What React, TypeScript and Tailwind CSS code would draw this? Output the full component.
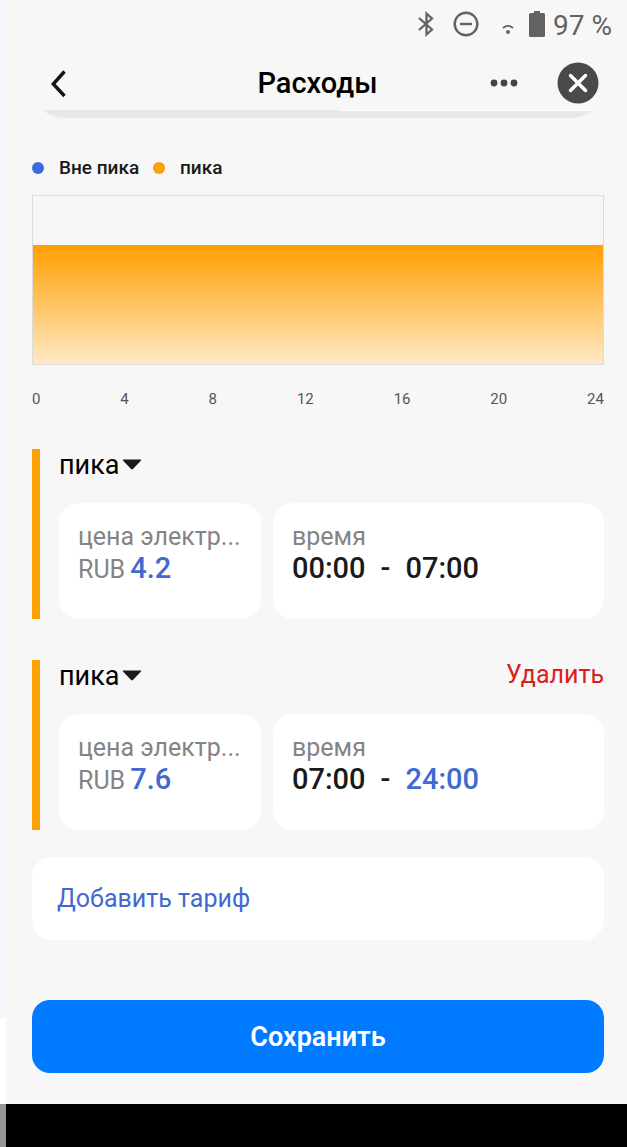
import { useState } from "react";

type Period = {
  id: string;
  kind: string;
  price: string;
  from: string;
  to: string;
  editableEnd: boolean;
  removable: boolean;
};

const HOURS = [0, 4, 8, 12, 16, 20, 24];

const LEGEND = [
  { label: "Вне пика", dot: "bg-[#3d6ae0]", text: "w-[94px]" },
  { label: "пика", dot: "bg-[#fca004]", text: "" },
];

const INITIAL_PERIODS: Period[] = [
  { id: "a", kind: "пика", price: "4.2", from: "00:00", to: "07:00", editableEnd: false, removable: false },
  { id: "b", kind: "пика", price: "7.6", from: "07:00", to: "24:00", editableEnd: true, removable: true },
];

function StatusBar() {
  return (
    <div className="flex h-12 items-center justify-end pr-[15px] text-[#626262]">
      <svg className="mr-4 h-7 w-5" viewBox="0 0 20 28" fill="none" stroke="currentColor" strokeWidth="2.3">
        <path d="M3 8l13 11.500-5.500 5V3.500l5.500 5L3 20" />
      </svg>
      <svg className="mr-[22px] h-7 w-7" viewBox="0 0 28 28" fill="none" stroke="currentColor" strokeWidth="2.4">
        <circle cx="14" cy="14" r="11.300" />
        <path d="M8 14h12" />
      </svg>
      <svg className="mr-[15px] h-7 w-3" viewBox="0 0 12 28" fill="none">
        <path d="M1 18Q6 13.800 11 18" stroke="currentColor" strokeWidth="1.800" />
        <circle cx="6" cy="22" r="2" fill="currentColor" />
      </svg>
      <svg className="mr-2 h-7 w-4" viewBox="0 0 16 28" fill="currentColor">
        <path d="M5 1h6v2h3.500a1.500 1.500 0 0 1 1.500 1.500v21a1.500 1.500 0 0 1-1.500 1.500h-13A1.500 1.500 0 0 1 0 25.500v-21A1.500 1.500 0 0 1 1.500 3H5z" />
      </svg>
      <span className="pt-[3px] text-[28px] leading-8">97 %</span>
    </div>
  );
}

function Header() {
  return (
    <header className="grid h-[62px] grid-cols-[1fr_auto_1fr] items-center pt-2 pr-7 pl-[30px]">
      <button type="button" aria-label="Назад" className="h-8 w-8">
        <svg className="h-8 w-8" viewBox="0 0 32 32" fill="none" stroke="#151515" strokeWidth="3.4">
          <path d="M28.500 4.500L17.300 17l11.200 12" />
        </svg>
      </button>
      <h1 className="text-[29px] leading-8 font-medium text-black">Расходы</h1>
      <div className="flex items-center justify-end gap-[39px]">
        <button type="button" aria-label="Ещё" className="text-[#444]">
          <svg className="h-8 w-7" viewBox="0 0 28 32" fill="currentColor">
            <circle cx="4" cy="16" r="3.400" />
            <circle cx="14" cy="16" r="3.400" />
            <circle cx="24" cy="16" r="3.400" />
          </svg>
        </button>
        <button type="button" aria-label="Закрыть">
          <svg className="h-[42px] w-[42px]" viewBox="0 0 42 42" fill="none">
            <circle cx="21" cy="21" r="20.500" fill="#4a4a4a" />
            <path d="M13.500 13.500l15 15M28.500 13.500l-15 15" stroke="#fff" strokeWidth="3.500" strokeLinecap="round" />
          </svg>
        </button>
      </div>
    </header>
  );
}

function Chart() {
  return (
    <section className="mt-9">
      <ul className="flex h-7 items-center text-[19px] leading-7 font-medium text-[#1a1a1a]">
        {LEGEND.map((item) => (
          <li key={item.label} className="flex items-center gap-[15px]">
            <span className={`h-3 w-3 rounded-full ${item.dot}`} />
            <span className={item.text}>{item.label}</span>
          </li>
        ))}
      </ul>
      <div className="mt-[13px] flex h-[170px] flex-col justify-end border border-[#dcdcdc]">
        <div className="h-[119px] bg-linear-to-b/srgb from-[#ffa000] to-[#ffe9c6]" />
      </div>
      <div className="mt-[23px] flex justify-between text-[15px] leading-[22px] text-[#555]">
        {HOURS.map((hour) => (
          <span key={hour}>{hour}</span>
        ))}
      </div>
    </section>
  );
}

type TariffProps = {
  period: Period;
  onChange: (patch: Partial<Period>) => void;
  onRemove: () => void;
};

function Tariff({ period, onChange, onRemove }: TariffProps) {
  return (
    <section className="flex border-l-8 border-[#fca004] pl-[19px]">
      <div className="min-w-0 flex-1">
        <div className="flex h-[54px] items-start justify-between">
          <label className="flex items-center">
            <select
              aria-label="Тип тарифа"
              value={period.kind}
              onChange={(e) => onChange({ kind: e.target.value })}
              className="field-sizing-content appearance-none bg-transparent text-[27px] leading-8 text-black"
            >
              <option>пика</option>
              <option>Вне пика</option>
            </select>
            <svg className="ml-[3px] h-3 w-5" viewBox="0 0 20 12" fill="#1a1a1a">
              <path d="M1.500 .5h17q1.500 0 .3 1.200l-7.600 8q-1.200 1.200-2.400 0L1.200 1.700Q0 .5 1.500 .5z" />
            </svg>
          </label>
          {period.removable && (
            <button type="button" onClick={onRemove} className="text-[25px] leading-[30px] text-[#d9201a]">
              Удалить
            </button>
          )}
        </div>

        <div className="grid grid-cols-[202fr_331fr] gap-3">
          <div className="h-[116px] min-w-0 rounded-[20px] bg-white px-[19px] pt-[18px]">
            <label htmlFor={`price-${period.id}`} className="block text-[25px] leading-8 whitespace-nowrap text-[#848484]">
              цена электр...
            </label>
            <div className="flex items-baseline gap-[5px]">
              <span className="text-[25px] leading-[30px] text-[#848484]">RUB</span>
              <input
                id={`price-${period.id}`}
                inputMode="decimal"
                value={period.price}
                onChange={(e) => onChange({ price: e.target.value })}
                className="field-sizing-content h-[30px] bg-transparent text-[29px] leading-[30px] font-medium text-[#4169d1] outline-none"
              />
            </div>
          </div>
          <div className="h-[116px] rounded-[20px] bg-white px-[19px] pt-[18px]">
            <div className="text-[25px] leading-8 text-[#848484]">время</div>
            <div className="flex h-[30px] items-center gap-[15px] text-[29px] leading-[30px] font-medium text-[#1a1a1a]">
              <span>{period.from}</span>
              <span>-</span>
              {period.editableEnd ? (
                <button type="button" className="text-[#4169d1]">
                  {period.to}
                </button>
              ) : (
                <span>{period.to}</span>
              )}
            </div>
          </div>
        </div>
      </div>
    </section>
  );
}

export default function App() {
  const [periods, setPeriods] = useState(INITIAL_PERIODS);

  const update = (id: string, patch: Partial<Period>) =>
    setPeriods((list) => list.map((p) => (p.id === id ? { ...p, ...patch } : p)));

  const remove = (id: string) => setPeriods((list) => list.filter((p) => p.id !== id));

  const add = () =>
    setPeriods((list) => [
      ...list,
      { id: crypto.randomUUID(), kind: "пика", price: "0", from: "00:00", to: "24:00", editableEnd: true, removable: true },
    ]);

  return (
    <div className="flex min-h-screen bg-[#f7f7f7] font-[Roboto,'Noto_Sans',sans-serif]">
      {/* edge of the page underneath */}
      <div className="flex w-1.5 flex-col bg-[#f5f6fb]">
        <div className="mt-auto h-[86px] bg-white" />
        <div className="h-[43px] bg-[#959595]" />
      </div>

      <div className="flex min-w-0 flex-1 flex-col">
        <StatusBar />
        <Header />

        <main className="flex flex-1 flex-col pr-[23px] pl-[26px]">
          {/* bottom edge of the card scrolled under the header */}
          <div className="relative flex h-2 items-end overflow-hidden">
            <div className="h-16 flex-1 rounded-b-[32px] bg-[#e8e8e8]" />
            <div className="absolute top-0 right-3 h-px w-[252px] bg-white" />
          </div>

          <Chart />

          <div className="mt-[39px] flex flex-col gap-[41px]">
            {periods.map((period) => (
              <Tariff
                key={period.id}
                period={period}
                onChange={(patch) => update(period.id, patch)}
                onRemove={() => remove(period.id)}
              />
            ))}
          </div>

          <button
            type="button"
            onClick={add}
            className="mt-[27px] h-[83px] rounded-[20px] bg-white px-[25px] text-left text-[25px] leading-8 text-[#4169d1]"
          >
            Добавить тариф
          </button>

          <button
            type="button"
            className="mt-[60px] mb-[31px] h-[73px] rounded-[18px] bg-[#007aff] text-[27px] leading-8 font-semibold text-white"
          >
            Сохранить
          </button>
        </main>

        <div className="h-[43px] bg-black" />
      </div>
    </div>
  );
}
